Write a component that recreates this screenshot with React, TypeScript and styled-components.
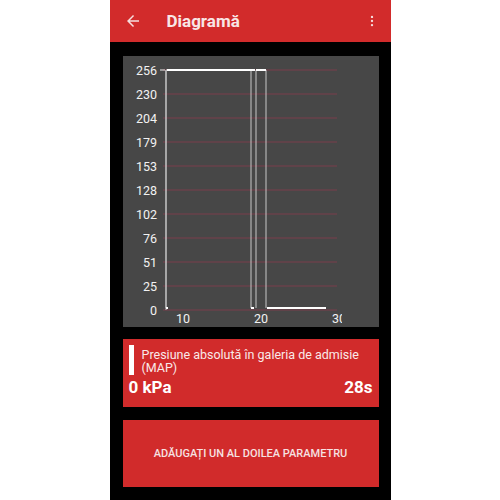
import { createGlobalStyle } from 'styled-components';
import styled from 'styled-components';

const GlobalStyle = createGlobalStyle`
	html, body {
		margin: 0;
		padding: 0;
		background: #ffffff;
		font-family: Roboto, 'Liberation Sans', sans-serif;
	}
`;

const yTicks = [256, 230, 204, 179, 153, 128, 102, 76, 51, 25, 0];

const Chart = () => {
	const top = 14;
	const step = 24;
	const bottom = top + step * 10;
	return (
		<svg width="256" height="271" viewBox="0 0 256 271">
			<defs>
				<clipPath id="xclip">
					<rect x="0" y="0" width="219" height="271" />
				</clipPath>
			</defs>
			{yTicks.map((v, i) => (
				<g key={v}>
					<line
						x1="40"
						x2="214"
						y1={top + i * step}
						y2={top + i * step}
						stroke="#68414a"
						strokeWidth="1.5"
					/>
					<text
						x="34"
						y={top + i * step + 4.5}
						fill="#f2f2f2"
						fontSize="12.5"
						textAnchor="end"
						fontFamily="Roboto, 'Liberation Sans', sans-serif"
					>
						{v}
					</text>
				</g>
			))}
			<line x1="37" x2="42" y1={top} y2={top} stroke="#eee" strokeWidth="1" />
			<line x1="43" x2="43" y1={top} y2={bottom} stroke="#c4c4c4" strokeWidth="1" />
			<g clipPath="url(#xclip)" fill="#f2f2f2" fontSize="12.5" fontFamily="Roboto, 'Liberation Sans', sans-serif">
				<text x="60" y="267" textAnchor="middle">10</text>
				<text x="138" y="267" textAnchor="middle">20</text>
				<text x="216" y="267" textAnchor="middle">30</text>
			</g>
			<polyline
				points={`43,${bottom - 2} 43,${top} 128,${top} 128,${bottom - 2}`}
				fill="none"
				stroke="#c8c8c8"
				strokeWidth="1"
			/>
			<polyline
				points={`133,${bottom - 2} 133,${top} 143,${top} 143,${bottom - 2}`}
				fill="none"
				stroke="#c8c8c8"
				strokeWidth="1"
			/>
			<line x1="44" x2="132" y1={top} y2={top} stroke="#ffffff" strokeWidth="2" />
			<line x1="133" x2="143" y1={top} y2={top} stroke="#ffffff" strokeWidth="2" />
			<line x1="144" x2="203" y1={bottom - 2} y2={bottom - 2} stroke="#ffffff" strokeWidth="2" />
			<rect x="128" y={bottom - 3} width="3" height="2" fill="#fff" />
			<rect x="43" y={bottom - 3} width="2" height="2" fill="#fff" />
		</svg>
	);
};

const App = () => {
	return (
		<>
			<GlobalStyle />
			<Phone>
				<TopBar>
					<BackIcon viewBox="0 0 24 24">
						<path d="M20 11H7.83l5.59-5.59L12 4l-8 8 8 8 1.41-1.41L7.83 13H20v-2z" fill="#f6dede" />
					</BackIcon>
					<Title>Diagramă</Title>
					<MenuIcon viewBox="0 0 24 24">
						<circle cx="12" cy="5" r="2" fill="#f6dede" />
						<circle cx="12" cy="12" r="2" fill="#f6dede" />
						<circle cx="12" cy="19" r="2" fill="#f6dede" />
					</MenuIcon>
				</TopBar>
				<Content>
					<ChartPanel>
						<Chart />
					</ChartPanel>
					<InfoCard>
						<NameRow>
							<Marker />
							<ParamName>Presiune absolută în galeria de admisie (MAP)</ParamName>
						</NameRow>
						<ValueRow>
							<Value>0 kPa</Value>
							<Value>28s</Value>
						</ValueRow>
					</InfoCard>
					<AddButton>ADĂUGAȚI UN AL DOILEA PARAMETRU</AddButton>
				</Content>
			</Phone>
		</>
	);
};

export default App;

const Phone = styled.div`
	width: 281px;
	height: 500px;
	margin: 0 auto;
	background: #000;
	display: flex;
	flex-direction: column;
`;

const TopBar = styled.div`
	height: 42px;
	background: #d22b2b;
	display: flex;
	align-items: center;
	padding: 0 12px 0 14px;
	box-sizing: border-box;
`;

const BackIcon = styled.svg`
	width: 18px;
	height: 18px;
`;

const Title = styled.h1`
	margin: 0 0 0 25px;
	font-size: 17px;
	font-weight: bold;
	color: #f8e6e6;
	flex: 1;
`;

const MenuIcon = styled.svg`
	width: 14px;
	height: 16px;
`;

const Content = styled.div`
	display: flex;
	flex-direction: column;
	padding: 14px 12px 0 13px;
`;

const ChartPanel = styled.div`
	height: 271px;
	background: #474747;
	display: flex;
`;

const InfoCard = styled.div`
	margin-top: 12px;
	height: 68px;
	background: #d12b2b;
	box-sizing: border-box;
	padding: 6px 6px 0 6px;
	display: flex;
	flex-direction: column;
`;

const NameRow = styled.div`
	display: flex;
	gap: 8px;
`;

const Marker = styled.div`
	width: 5px;
	height: 30px;
	background: #fff;
	flex-shrink: 0;
`;

const ParamName = styled.div`
	font-size: 12.5px;
	line-height: 13px;
	color: #f9e9e9;
	padding-top: 3px;
`;

const ValueRow = styled.div`
	display: flex;
	justify-content: space-between;
	margin-top: 2px;
`;

const Value = styled.span`
	font-size: 17px;
	font-weight: bold;
	color: #fff;
`;

const AddButton = styled.div`
	margin-top: 13px;
	height: 67px;
	background: #d12b2b;
	display: flex;
	align-items: center;
	justify-content: center;
	font-size: 11px;
	font-weight: 500;
	color: #f6e2e2;
`;
